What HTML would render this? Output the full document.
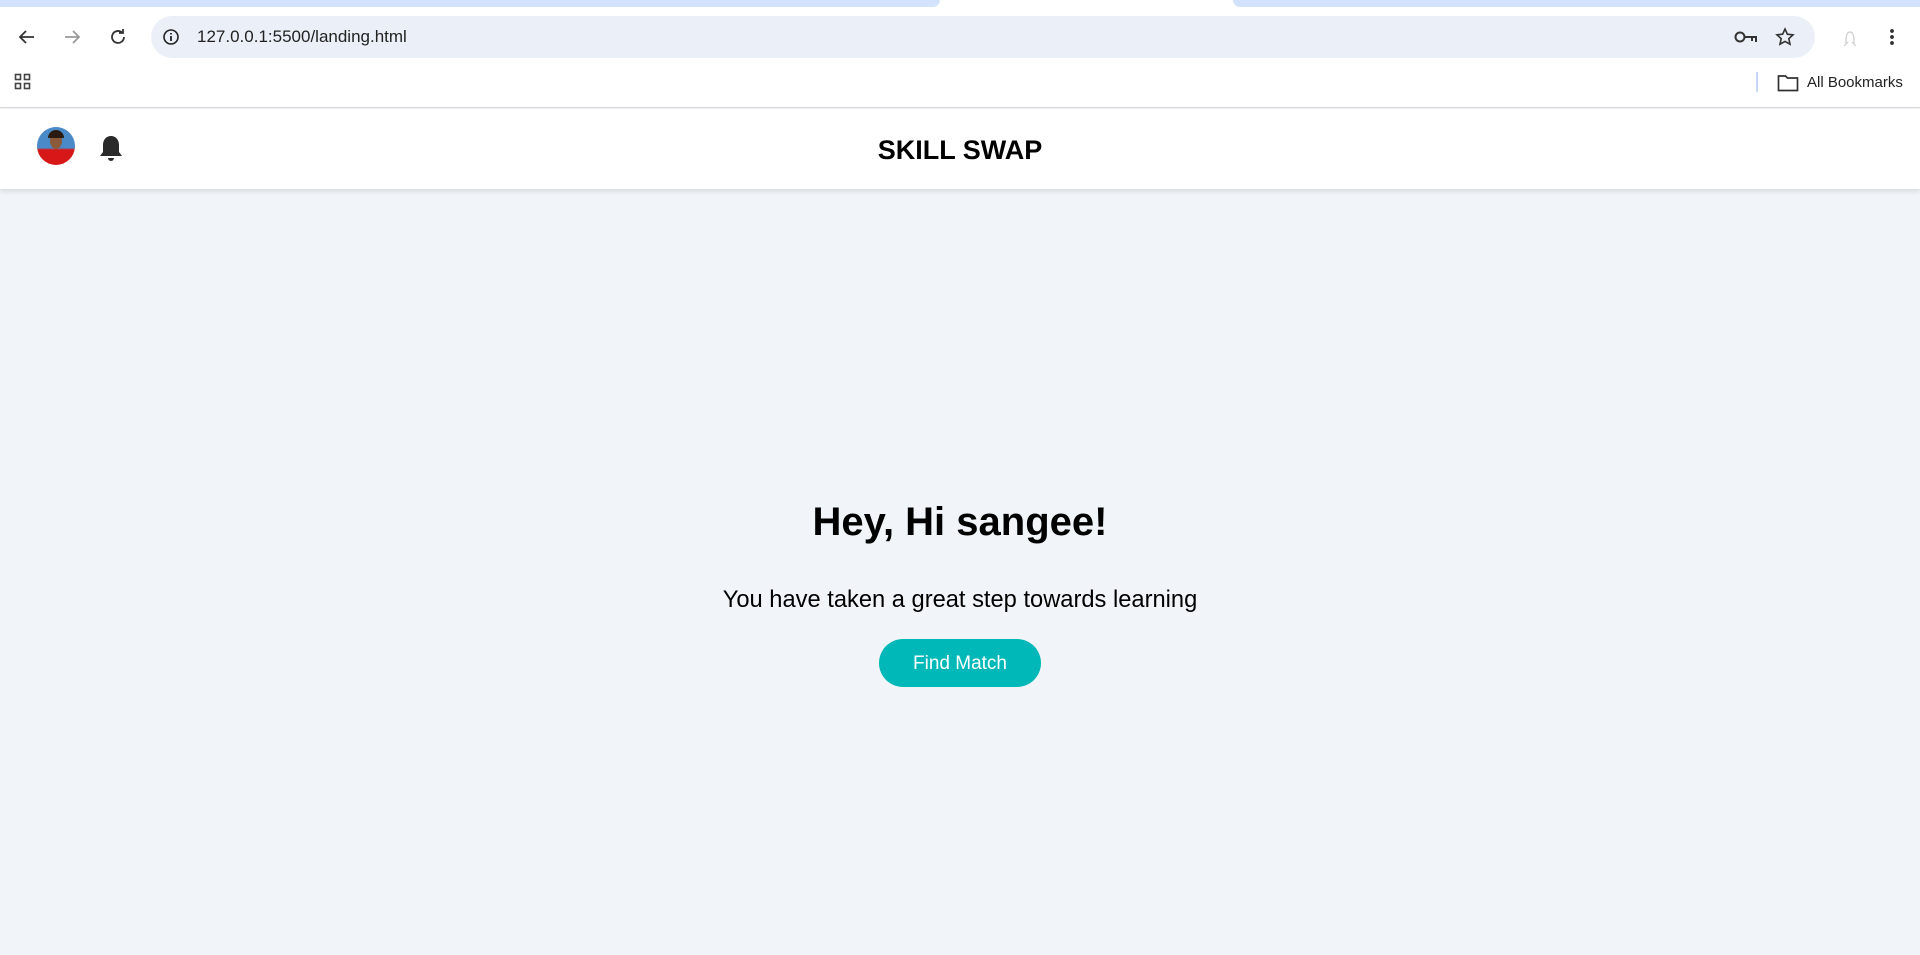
<!DOCTYPE html>
<html><head><meta charset="utf-8"><style>
*{margin:0;padding:0;box-sizing:border-box}
body{width:1920px;height:955px;overflow:hidden;background:#f1f5f9;font-family:"Liberation Sans",sans-serif;position:relative}
.abs{position:absolute}
</style></head><body>
<div class="abs" style="left:0;top:0;width:1920px;height:108px;background:#fff;border-bottom:1px solid #dcdcdc"></div>
<div class="abs" style="left:0;top:0;width:940px;height:7px;background:#d3e3fd;border-radius:0 0 10px 0"></div>
<div class="abs" style="left:1233px;top:0;width:687px;height:7px;background:#d3e3fd;border-radius:0 0 0 10px"></div>
<div class="abs" style="left:151px;top:16px;width:1664px;height:42px;background:#ebf0f8;border-radius:21px"></div>
<svg class="abs" style="left:17px;top:27px" width="20" height="20" viewBox="0 0 20 20"><path d="M17 10H4M9 4l-6 6 6 6" stroke="#333" stroke-width="1.8" fill="none"/></svg>
<svg class="abs" style="left:62px;top:27px" width="20" height="20" viewBox="0 0 20 20"><path d="M3 10h13M11 4l6 6-6 6" stroke="#999" stroke-width="1.8" fill="none"/></svg>
<svg class="abs" style="left:108px;top:27px" width="20" height="20" viewBox="0 0 20 20"><path d="M16 10a6 6 0 1 1-2-4.5M15 2v4h-4" stroke="#333" stroke-width="1.8" fill="none"/></svg>
<svg class="abs" style="left:161px;top:27px" width="20" height="20" viewBox="0 0 20 20"><circle cx="10" cy="10" r="7" stroke="#222" stroke-width="1.6" fill="none"/><path d="M10 9v5M10 6v1.5" stroke="#222" stroke-width="1.8"/></svg>
<div class="abs" style="left:197px;top:27px;font-size:17px;color:#222">127.0.0.1:5500/landing.html</div>
<svg class="abs" style="left:1734px;top:29px" width="24" height="16" viewBox="0 0 24 16"><circle cx="6" cy="8" r="4.5" stroke="#333" stroke-width="2" fill="none"/><path d="M10 8h12v5M18 8v4" stroke="#333" stroke-width="2" fill="none"/></svg>
<svg class="abs" style="left:1775px;top:27px" width="20" height="20" viewBox="0 0 20 20"><path d="M10 2l2.4 5.2 5.6.6-4.2 3.8 1.2 5.6L10 14.4 5 17.2l1.2-5.6L2 7.8l5.6-.6z" stroke="#333" stroke-width="1.6" fill="none"/></svg>
<svg class="abs" style="left:1840px;top:26px" width="20" height="22" viewBox="0 0 20 22"><path d="M6 18c0-6 0-12 4-12s4 6 4 12M4 20l4-4M16 20l-4-4" stroke="#ccc" stroke-width="1.2" fill="none"/></svg>
<div class="abs" style="left:1890px;top:28px;width:4px;height:18px;background:radial-gradient(circle,#333 1.8px,transparent 2px) 0 0/4px 6px"></div>
<svg class="abs" style="left:14px;top:73px" width="18" height="18" viewBox="0 0 18 18"><g stroke="#444" stroke-width="1.6" fill="none"><rect x="1.5" y="1.5" width="5" height="5"/><rect x="10.5" y="1.5" width="5" height="5"/><rect x="1.5" y="10.5" width="5" height="5"/><rect x="10.5" y="10.5" width="5" height="5"/></g></svg>
<div class="abs" style="left:1756px;top:72px;width:2px;height:20px;background:#c8d8f5"></div>
<svg class="abs" style="left:1777px;top:74px" width="22" height="18" viewBox="0 0 22 18"><path d="M1.5 2h7l2 2h10v12.5h-19z" stroke="#333" stroke-width="1.7" fill="none"/></svg>
<div class="abs" style="left:1807px;top:74px;font-size:15px;color:#222">All Bookmarks</div>
<div class="abs" style="left:0;top:109px;width:1920px;height:80px;background:#fff;box-shadow:0 2px 5px rgba(0,0,0,.12)"></div>
<div class="abs" style="left:37px;top:127px;width:38px;height:38px;border-radius:50%;background:linear-gradient(#4a8ac8 0,#4a8ac8 55%,#d81818 60%,#d81818 100%);overflow:hidden"><div style="position:absolute;left:13px;top:6px;width:12px;height:16px;border-radius:50%;background:#8a5a3a"></div><div style="position:absolute;left:11px;top:3px;width:16px;height:8px;border-radius:8px 8px 0 0;background:#2a1a10"></div></div>
<svg class="abs" style="left:98px;top:134px" width="26" height="30" viewBox="0 0 26 30"><path d="M13 2c-5 0-8 4-8 9v7l-3 4h22l-3-4v-7c0-5-3-9-8-9z" fill="#2a2a2a"/><path d="M10 24a3 3 0 0 0 6 0z" fill="#2a2a2a"/></svg>
<div class="abs" style="left:0;top:135px;width:1920px;text-align:center;font-size:27px;font-weight:bold;color:#000">SKILL SWAP</div>
<div class="abs" style="left:0;top:500px;width:1920px;text-align:center;font-size:40px;font-weight:bold;color:#000">Hey, Hi sangee!</div>
<div class="abs" style="left:0;top:587px;width:1920px;text-align:center;font-size:23.7px;color:#000">You have taken a great step towards learning</div>
<div class="abs" style="left:879px;top:639px;width:162px;height:48px;border-radius:24px;background:#00b8b8;color:#fff;font-size:19px;text-align:center;line-height:50px">Find Match</div>
</body></html>
